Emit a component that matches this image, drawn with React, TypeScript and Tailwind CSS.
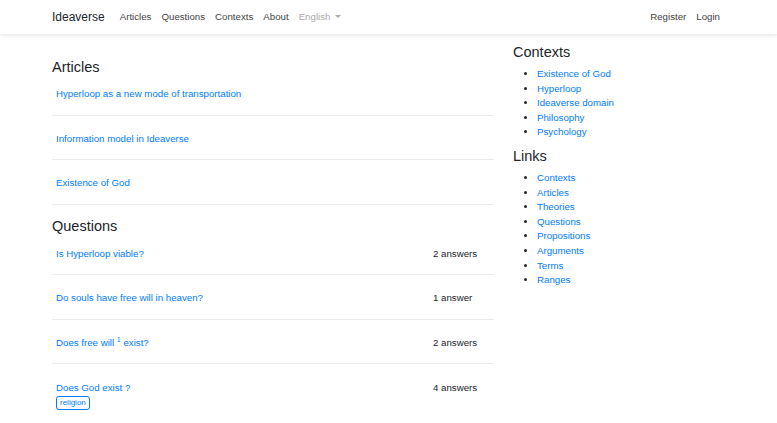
const articles = [
  "Hyperloop as a new mode of transportation",
  "Information model in Ideaverse",
  "Existence of God",
];

const contexts = ["Existence of God", "Hyperloop", "Ideaverse domain", "Philosophy", "Psychology"];
const links = ["Contexts", "Articles", "Theories", "Questions", "Propositions", "Arguments", "Terms", "Ranges"];

const Navbar = () => (
  <header className="h-[34px] bg-white shadow-[0_1px_4px_rgba(0,0,0,0.12)]">
    <div className="w-[673px] mx-auto h-full flex items-center justify-between">
      <div className="flex items-center">
        <a href="#" className="text-[12px] text-[#212529] mr-[10px]">
          Ideaverse
        </a>
        <nav className="flex items-center text-[9.7px] text-[#444]">
          <a href="#" className="px-[5px]">Articles</a>
          <a href="#" className="px-[5px]">Questions</a>
          <a href="#" className="px-[5px]">Contexts</a>
          <a href="#" className="px-[5px]">About</a>
          <a href="#" className="px-[5px] flex items-center text-[#aaa]">
            English
            <span className="ml-[5px] inline-block w-0 h-0 border-x-[3px] border-x-transparent border-t-[3px] border-t-[#aaa]" />
          </a>
        </nav>
      </div>
      <nav className="flex items-center text-[9.7px] text-[#444]">
        <a href="#" className="px-[5px]">Register</a>
        <a href="#" className="px-[5px]">Login</a>
      </nav>
    </div>
  </header>
);

const Count = ({ text }: { text: string }) => (
  <span className="w-[44px] shrink-0 whitespace-nowrap text-[#212529]">{text}</span>
);

const Row = ({ children, right }: { children: React.ReactNode; right?: string }) => (
  <div className="h-[44.5px] border-b border-[#e9ecef] flex items-center justify-between pl-[4px] pr-[17px] pt-[4px]">
    <div>{children}</div>
    {right && <Count text={right} />}
  </div>
);

export default function App() {
  return (
    <div className="min-h-screen bg-white text-[9.7px] text-[#212529] font-['Liberation_Sans',Arial,sans-serif]">
      <Navbar />
      <div className="w-[673px] mx-auto flex gap-[19px]">
        <main className="w-[442px] pt-[24px]">
          <h4 className="text-[14.5px] leading-[18px]">Articles</h4>
          <div className="-mt-[5px]">
            {articles.map((a) => (
              <Row key={a}>
                <a href="#" className="text-[#007bff]">{a}</a>
              </Row>
            ))}
          </div>
          <h4 className="text-[14.5px] leading-[18px] mt-[12px]">Questions</h4>
          <div className="-mt-[4px]">
            <Row right="2 answers">
              <a href="#" className="text-[#007bff]">Is Hyperloop viable?</a>
            </Row>
            <Row right="1 answer">
              <a href="#" className="text-[#007bff]">Do souls have free will in heaven?</a>
            </Row>
            <Row right="2 answers">
              <a href="#" className="text-[#007bff]">
                Does free will <sup className="text-[7px]">1</sup> exist?
              </a>
            </Row>
            <div className="flex justify-between pl-[4px] pr-[17px] pt-[17px]">
              <div className="flex flex-col items-start">
                <a href="#" className="text-[#007bff]">Does God exist ?</a>
                <span className="px-[3px] border border-[#007bff] rounded-[3px] text-[8px] leading-[12px] text-[#007bff]">
                  religion
                </span>
              </div>
              <Count text="4 answers" />
            </div>
          </div>
        </main>
        <aside className="flex-1 pt-[9px]">
          <h4 className="text-[14.5px] leading-[18px]">Contexts</h4>
          <ul className="list-disc pl-[24px] mt-[6px] leading-[14.6px]">
            {contexts.map((c) => (
              <li key={c}>
                <a href="#" className="text-[#007bff]">{c}</a>
              </li>
            ))}
          </ul>
          <h4 className="text-[14.5px] leading-[18px] mt-[7px]">Links</h4>
          <ul className="list-disc pl-[24px] mt-[6px] leading-[14.6px]">
            {links.map((c) => (
              <li key={c}>
                <a href="#" className="text-[#007bff]">{c}</a>
              </li>
            ))}
          </ul>
        </aside>
      </div>
    </div>
  );
}
